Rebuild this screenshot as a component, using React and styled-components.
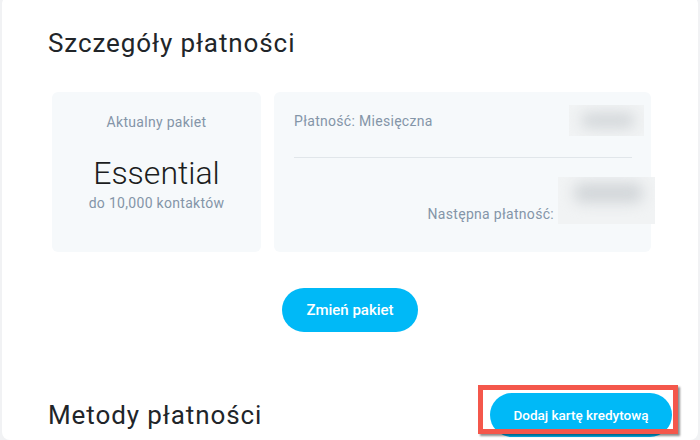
import styled, { createGlobalStyle } from "styled-components";

const Global = createGlobalStyle`
  html, body {
    margin: 0;
    padding: 0;
    background: #f1f2f4;
    font-family: Roboto, "Liberation Sans", sans-serif;
  }
`;

const Page = styled.div`
  margin: -4px 2px 0;
  background: #fff;
  border-radius: 8px;
  height: 444px;
  padding: 0 46px;
  overflow: hidden;
`;

const Title = styled.h2`
  margin: 0;
  padding-top: 30px;
  font-size: 26px;
  font-weight: 400;
  letter-spacing: 0.9px;
  line-height: 34px;
  color: #212529;
`;

const Cards = styled.div`
  display: flex;
  gap: 13px;
  margin: 32px 1px 0 4px;
  height: 160px;
`;

const PlanCard = styled.div`
  background: #f6f9fb;
  border-radius: 6px;
  width: 209px;
  flex: none;
  display: flex;
  flex-direction: column;
  align-items: center;
  padding-top: 22px;
  box-sizing: border-box;
`;

const Muted = styled.span`
  font-size: 14px;
  color: #8495a8;
  letter-spacing: 0.3px;
  line-height: 16px;
`;

const PlanName = styled.div`
  margin: 24px 0 3px;
  font-size: 32px;
  font-weight: 300;
  line-height: 38px;
  color: #1b1d21;
`;

const BillingCard = styled.div`
  background: #f6f9fb;
  border-radius: 6px;
  flex: 1;
  min-width: 0;
  padding: 13px 0 0 20px;
  display: flex;
  flex-direction: column;
`;

const TopRow = styled.div`
  display: flex;
  justify-content: space-between;
  align-items: center;
  height: 31px;
  padding-right: 7px;
`;

const Divider = styled.div`
  margin: 21px 19px 0 0;
  border-top: 1px solid #e1e6ea;
`;

const BottomRow = styled.div`
  display: flex;
  justify-content: flex-end;
  align-items: flex-end;
  gap: 4px;
  margin: 19px -4px 0 0;
`;

const NextLabel = styled(Muted)`
  padding-bottom: 2px;
`;

const Blurred = styled.span`
  position: relative;
  display: block;
  width: ${(p) => p.$w}px;
  height: ${(p) => p.$h}px;
  background: #f1f3f4;
  overflow: hidden;
  &::after {
    content: "";
    position: absolute;
    left: 16%;
    right: 12%;
    top: ${(p) => p.$top}%;
    bottom: ${(p) => p.$bottom}%;
    background: #d2d6d9;
    border-radius: 8px;
    filter: blur(7px);
  }
`;

const Center = styled.div`
  display: flex;
  justify-content: center;
  margin-top: 36px;
`;

const Pill = styled.button`
  border: none;
  background: #00b9f7;
  color: #fff;
  font-family: Roboto, "Liberation Sans", sans-serif;
  font-size: ${(p) => p.$size || 15}px;
  font-weight: 500;
  height: 44px;
  padding: 0 ${(p) => p.$pad || 24}px;
  border-radius: 22px;
  cursor: pointer;
`;

const MethodsRow = styled.div`
  display: flex;
  justify-content: space-between;
  align-items: flex-start;
  margin: 61px -20px 0 0;
`;

const MethodsTitle = styled(Title)`
  padding-top: 5px;
`;

const Highlight = styled.div`
  position: relative;
  &::after {
    content: "";
    position: absolute;
    left: -12px;
    right: -6px;
    top: -8px;
    bottom: 3px;
    border: 5px solid #f4574b;
    box-shadow: 2px 2px 2px rgba(0, 0, 0, 0.45);
    pointer-events: none;
  }
`;

export default function App() {
  return (
    <>
      <Global />
      <Page>
        <Title>Szczegóły płatności</Title>
        <Cards>
          <PlanCard>
            <Muted>Aktualny pakiet</Muted>
            <PlanName>Essential</PlanName>
            <Muted>do 10,000 kontaktów</Muted>
          </PlanCard>
          <BillingCard>
            <TopRow>
              <Muted>Płatność: Miesięczna</Muted>
              <Blurred $w={75} $h={31} $top={25} $bottom={25} />
            </TopRow>
            <Divider />
            <BottomRow>
              <NextLabel>Następna płatność:</NextLabel>
              <Blurred $w={97} $h={47} $top={12} $bottom={45} />
            </BottomRow>
          </BillingCard>
        </Cards>
        <Center>
          <Pill>Zmień pakiet</Pill>
        </Center>
        <MethodsRow>
          <MethodsTitle>Metody płatności</MethodsTitle>
          <Highlight>
            <Pill $size={13.5} $pad={23.5}>Dodaj kartę kredytową</Pill>
          </Highlight>
        </MethodsRow>
      </Page>
    </>
  );
}
